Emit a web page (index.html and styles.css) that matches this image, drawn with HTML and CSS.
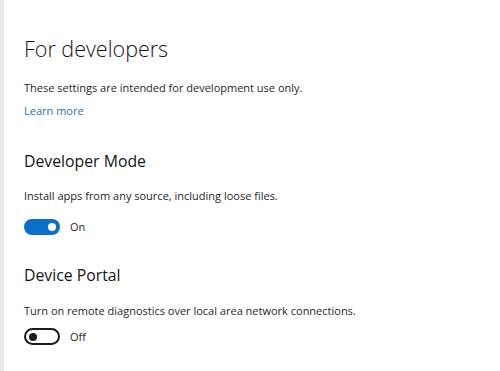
FILE: index.html
```html
<!DOCTYPE html>
<html>
<head>
<meta charset="utf-8">
<link rel="stylesheet" href="styles.css">
</head>
<body>
<div class="frame">
  <div class="edge"></div>
  <main class="content">
    <h1 class="title">For developers</h1>
    <p class="intro">These settings are intended for development use only.</p>
    <a class="link" href="#">Learn more</a>

    <section class="group group-first">
      <h2 class="subtitle">Developer Mode</h2>
      <p class="desc">Install apps from any source, including loose files.</p>
      <div class="toggle-row">
        <span class="toggle on"><span class="knob"></span></span>
        <span class="state">On</span>
      </div>
    </section>

    <section class="group group-second">
      <h2 class="subtitle">Device Portal</h2>
      <p class="desc">Turn on remote diagnostics over local area network connections.</p>
      <div class="toggle-row">
        <span class="toggle off"><span class="knob"></span></span>
        <span class="state">Off</span>
      </div>
    </section>
  </main>
</div>
</body>
</html>
```

FILE: styles.css
```css
html, body {
  margin: 0;
  padding: 0;
  background: #ffffff;
}

body {
  font-family: "Open Sans", "Noto Sans", sans-serif;
  color: #1f1f1f;
  width: 500px;
  height: 371px;
  overflow: hidden;
}

.frame {
  display: flex;
  height: 371px;
}

.edge {
  width: 4px;
  background: #e9e9e9;
  flex: none;
}

.content {
  padding: 34px 0 0 20px;
  flex: 1;
}

.title {
  margin: 0;
  font-size: 21.5px;
  font-weight: 300;
  line-height: 30px;
  color: #141414;
}

.intro,
.desc {
  margin: 0;
  font-size: 11px;
  line-height: 16px;
  color: #1f1f1f;
}

.intro {
  margin-top: 16px;
}

.link {
  display: block;
  margin-top: 7px;
  font-size: 11px;
  line-height: 16px;
  color: #2474ac;
  text-decoration: none;
}

.group-first {
  margin-top: 31px;
}

.group-second {
  margin-top: 29px;
}

.subtitle {
  margin: 0;
  font-size: 15.8px;
  font-weight: 400;
  line-height: 22px;
  color: #141414;
}

.group-first .desc {
  margin-top: 16px;
}

.group-second .desc {
  margin-top: 17px;
}

.toggle-row {
  display: flex;
  align-items: center;
  gap: 10px;
}

.group-first .toggle-row {
  margin-top: 15px;
}

.group-second .toggle-row {
  margin-top: 9px;
}

.toggle {
  box-sizing: border-box;
  width: 36px;
  height: 16px;
  border-radius: 8px;
  display: flex;
  align-items: center;
}

.toggle.on {
  background: #0b6fc8;
  justify-content: flex-end;
  padding: 0 4px;
}

.toggle.off {
  height: 17px;
  border-radius: 9px;
  border: 2px solid #1c1c1c;
  justify-content: flex-start;
  padding: 0 2.5px;
}

.knob {
  width: 8px;
  height: 8px;
  border-radius: 50%;
}

.toggle.on .knob { background: #ffffff; }
.toggle.off .knob { background: #1c1c1c; }

.state {
  font-size: 11px;
  line-height: 16px;
  color: #1f1f1f;
}
```
